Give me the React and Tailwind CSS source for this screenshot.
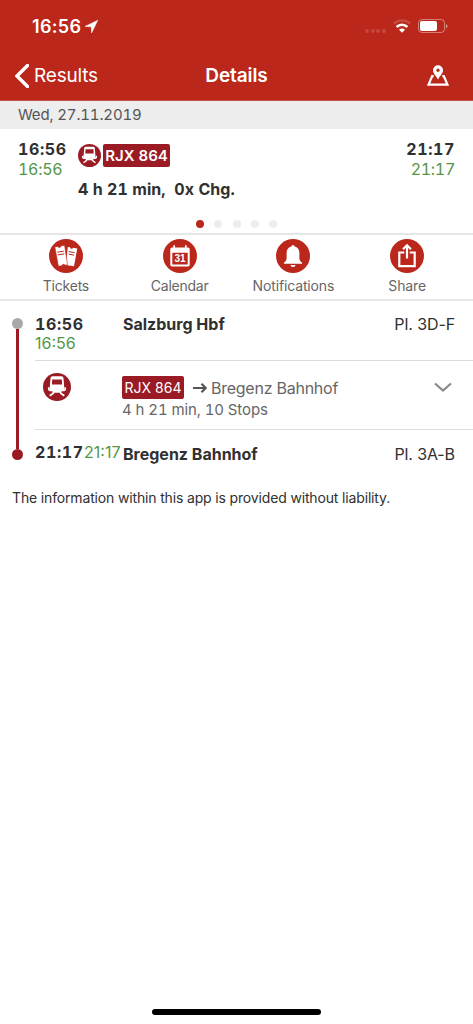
import React, { useState } from 'react';

const TrainIcon = ({ className }) => (
  <svg viewBox="0 0 28 28" className={className}>
    <circle cx="14" cy="14" r="14" fill="#9b1b24" />
    <path
      fill="#fff"
      fillRule="evenodd"
      d="M9.500 3.300h9a2 2 0 0 1 2 1.800l.8 10.400a2.400 2.400 0 0 1-2.400 2.500H9.100a2.400 2.400 0 0 1-2.400-2.500l.8-10.400a2 2 0 0 1 2-1.800zM9.200 6.500l-.3 5h10.200l-.3-5z"
    />
    <path d="M10.200 17.500h7.600v2.300h-7.600z" fill="#fff" />
    <path
      d="M5.800 14.200v2.300l1.200.9h3.300v2.800l-3.600 2.600M22.200 14.200v2.300l-1.200.9h-3.300v2.800l3.600 2.600"
      fill="none"
      stroke="#fff"
      strokeWidth="1.700"
    />
  </svg>
);

const TicketsIcon = () => (
  <svg viewBox="0 0 34 34" className="size-[34px]">
    <circle cx="17" cy="17" r="17" fill="#bb271a" />
    <path
      d="M18.800 7.900l2.200.3a1.600 1.600 0 0 0 3.100.5l4.200.8-3.300 17.700-8.200-1.300z"
      fill="#fff"
    />
    <path
      d="M5.800 7.900l3-.5a1.600 1.600 0 0 0 3.100-.5l3.700-.6 2.900 19.400-2.500.5a1.600 1.600 0 0 0-3 .5l-3.600.6z"
      fill="#fff"
      stroke="#bb271a"
      strokeWidth=".6"
    />
    <path
      d="M8.300 13.200l6.500-1M8.700 15.900l6.500-1M19.700 12.600l5.800 1M19.700 15.200l5.300.9"
      stroke="#bb271a"
      strokeWidth="1"
    />
  </svg>
);

const CalendarIcon = () => (
  <svg viewBox="0 0 34 34" className="size-[34px]">
    <circle cx="17" cy="17" r="17" fill="#bb271a" />
    <path
      fill="#fff"
      fillRule="evenodd"
      d="M9 8.500h16a1.700 1.700 0 0 1 1.700 1.700v15.600a1.700 1.700 0 0 1-1.700 1.700H9a1.700 1.700 0 0 1-1.700-1.700V10.200A1.700 1.700 0 0 1 9 8.500zM9.300 13.700v11.900h15.400V13.700z"
    />
    <path d="M11.200 6.300v4M22.800 6.300v4" stroke="#fff" strokeWidth="1.700" />
    <text
      x="17"
      y="23.200"
      textAnchor="middle"
      fill="#fff"
      className="font-['Liberation_Sans',sans-serif] text-[10px] font-bold"
    >
      31
    </text>
  </svg>
);

const BellIcon = () => (
  <svg viewBox="0 0 34 34" className="size-[34px]">
    <circle cx="17" cy="17" r="17" fill="#bb271a" />
    <path
      fill="#fff"
      d="M17 6.200c.9 0 1.500.5 1.600 1.300 3 .7 4.800 3.100 4.800 6.300v5.500c0 1.900 1 3.300 2.700 4.500v.9H7.900v-.9c1.700-1.200 2.700-2.600 2.700-4.500v-5.500c0-3.200 1.800-5.600 4.800-6.300.1-.8.7-1.300 1.600-1.300zM14.500 26h5a2.500 2 0 0 1-5 0z"
    />
  </svg>
);

const ShareIcon = () => (
  <svg viewBox="0 0 34 34" className="size-[34px]">
    <circle cx="17" cy="17" r="17" fill="#bb271a" />
    <path
      d="M14.300 13.500H9.300v13.700h15.400V13.500h-5M17 19.500V6.500M13 10.300l4-4 4 4"
      fill="none"
      stroke="#fff"
      strokeWidth="2.200"
    />
  </svg>
);

const MapPinIcon = () => (
  <svg viewBox="0 0 22 22" className="h-[22px] w-[22px]">
    <path
      fill="#fff"
      fillRule="evenodd"
      d="M11 .2a5 5 0 0 1 5 5c0 3.300-3 5.300-5 9.300-2-4-5-6-5-9.300a5 5 0 0 1 5-5zm0 3.300a1.700 1.700 0 1 0 0 3.400 1.700 1.700 0 0 0 0-3.400z"
    />
    <path d="M6.700 11.200H5.100L1.500 19.700h19l-3.600-8.500h-1.600" fill="none" stroke="#fff" strokeWidth="2.200" />
  </svg>
);

const StatusBar = () => (
  <div className="flex h-[52px] items-center justify-between pl-[32px] pr-[25px]">
    <div className="flex items-center gap-[4px]">
      <span className="text-[18px] font-semibold tracking-[0.3px]">16:56</span>
      <svg viewBox="0 0 13 13" className="size-[13px]">
        <path d="M12.800.2L0 6.400l6.200.4.400 6.200z" fill="#fff" stroke="#fff" strokeWidth=".5" strokeLinejoin="round" />
      </svg>
    </div>
    <div className="flex items-center">
      <div className="mr-[7px] mt-[9px] flex gap-[1.700px]">
        {[0, 1, 2, 3].map((i) => (
          <span key={i} className="size-[4px] rounded-full bg-white/15" />
        ))}
      </div>
      <svg viewBox="0 0 18 14" className="mr-[7px] h-[14px] w-[18px]">
        <path d="M.8 4.600a11.800 11.800 0 0 1 16.400 0" fill="none" stroke="#fff" strokeOpacity=".17" strokeWidth="2.300" />
        <path d="M3.600 8a7.700 7.700 0 0 1 10.800 0" fill="none" stroke="#fff" strokeWidth="2.600" />
        <path d="M9 13.800l-3-3.100a4.200 4.200 0 0 1 6 0z" fill="#fff" />
      </svg>
      <svg viewBox="0 0 30 14" className="h-[14px] w-[30px]">
        <rect x=".5" y=".5" width="26" height="13" rx="3.500" fill="none" stroke="#fff" strokeOpacity=".4" />
        <rect x="2" y="2" width="17" height="10" rx="2" fill="#fff" />
        <path d="M28 5v4.500q1.500-.6 1.500-2.200T28 5z" fill="#fff" fillOpacity=".5" />
      </svg>
    </div>
  </div>
);

const actions = [
  { label: 'Tickets', icon: <TicketsIcon />, text: 'tracking-[-0.2px]' },
  { label: 'Calendar', icon: <CalendarIcon />, text: 'tracking-[-0.25px]' },
  { label: 'Notifications', icon: <BellIcon />, text: 'tracking-[-0.15px]' },
  { label: 'Share', icon: <ShareIcon />, text: 'tracking-[-0.15px]' },
];

const App = () => {
  const [page, setPage] = useState(0);

  return (
    <div className="flex h-[1024px] w-[473px] flex-col overflow-hidden bg-white font-['Inter',sans-serif] text-[#303030]">
      <header className="h-[101px] shrink-0 border-b border-[#c4513f] bg-[#bb271a] text-white">
        <StatusBar />
        <div className="grid h-[48px] grid-cols-3 items-center pl-[15px] pr-[24px]">
          <button className="flex items-center gap-[5px] text-[19px] leading-[24px] tracking-[-0.2px]">
            <svg viewBox="0 0 14 24" className="h-[24px] w-[14px]">
              <path d="M12.500 1.500L2 12l10.500 10.500" fill="none" stroke="#fff" strokeWidth="3.400" strokeLinecap="round" />
            </svg>
            <span>Results</span>
          </button>
          <h1 className="ml-[9px] text-center text-[19px] font-semibold leading-[24px] tracking-[-0.1px]">Details</h1>
          <button className="justify-self-end">
            <MapPinIcon />
          </button>
        </div>
      </header>

      <div className="h-[28px] shrink-0 bg-[#ededed] pl-[18px] text-[15px] tabular-nums leading-[28px] tracking-[-0.15px] text-[#555]">
        Wed, 27.11.2019
      </div>

      <section className="flex h-[106px] shrink-0 flex-col border-b-2 border-[#e6e6e6]">
        <div className="flex h-[91px] pl-[18px] pr-[18px] pt-[10px] tabular-nums">
          <div className="w-[60px] leading-[20px]">
            <div className="text-[16px] font-bold tracking-[0.6px]">16:56</div>
            <div className="text-[16px] tracking-[-0.3px] text-[#559646]">16:56</div>
          </div>
          <div className="grow pt-[5px]">
            <div className="flex items-center gap-[2px]">
              <TrainIcon className="size-[23px]" />
              <span className="h-[23px] w-[67px] rounded-[2px] bg-[#9b1b24] text-center text-[15px] font-semibold leading-[23px] text-white">
                RJX 864
              </span>
            </div>
            <div className="mt-[12px] whitespace-pre text-[16px] font-bold leading-[20px] tracking-[0.05px]">4 h 21 min,  0x Chg.</div>
          </div>
          <div className="text-right leading-[20px]">
            <div className="text-[16px] font-bold tracking-[0.6px]">21:17</div>
            <div className="text-[16px] tracking-[-0.3px] text-[#559646]">21:17</div>
          </div>
        </div>
        <div className="flex justify-center gap-[10.300px]">
          {[0, 1, 2, 3, 4].map((i) => (
            <button
              key={i}
              onClick={() => setPage(i)}
              className={page === i ? 'size-[8px] rounded-full bg-[#bb271a]' : 'size-[8px] rounded-full bg-[#ededed]'}
            />
          ))}
        </div>
      </section>

      <nav className="grid h-[66px] shrink-0 grid-cols-4 border-b-2 border-[#e6e6e6] px-[9px] pt-[4px]">
        {actions.map((action) => (
          <button key={action.label} className="flex flex-col items-center">
            {action.icon}
            <span className={`mt-[3px] text-[14px] leading-[20px] text-[#666] ${action.text}`}>{action.label}</span>
          </button>
        ))}
      </nav>

      <section className="flex h-[174px] shrink-0">
        <div className="flex w-[35px] flex-col items-center pt-[17px]">
          <span className="size-[11px] rounded-full bg-[#a8a8a8]" />
          <span className="h-[120px] w-[3px] bg-[#9b1b24]" />
          <span className="size-[11px] rounded-full bg-[#9b1b24]" />
        </div>
        <div className="grow">
          <div className="flex h-[60px] border-b border-[#dcdcdc] pr-[18px] pt-[13px] text-[16px] leading-[20px]">
            <div className="w-[88px]">
              <div className="font-bold tabular-nums tracking-[0.6px]">16:56</div>
              <div className="-mt-px text-[#559646]">16:56</div>
            </div>
            <div className="grow font-bold">Salzburg Hbf</div>
            <div className="tracking-[-0.1px]">Pl. 3D-F</div>
          </div>
          <div className="flex h-[69px] border-b border-[#dcdcdc] pr-[21px] pt-[12px]">
            <TrainIcon className="ml-[8px] mr-[51px] size-[28px]" />
            <div className="grow pt-[3px] text-[#666]">
              <div className="flex items-center">
                <span className="h-[23px] w-[62px] rounded-[2px] bg-[#9b1b24] text-center text-[14px] leading-[23px] text-white">
                  RJX 864
                </span>
                <svg viewBox="0 0 14 12" className="ml-[9px] mr-[4px] h-[12px] w-[14px]">
                  <path d="M0 6h12.500M8.500 1.800L12.700 6l-4.200 4.200" fill="none" stroke="#555" strokeWidth="2.200" />
                </svg>
                <span className="text-[16px] leading-[20px] tracking-[-0.25px]">Bregenz Bahnhof</span>
              </div>
              <div className="mt-[1px] text-[15px] tabular-nums leading-[20px] tracking-[-0.1px]">4 h 21 min, 10 Stops</div>
            </div>
            <svg viewBox="0 0 18 10" className="mt-[9px] h-[10px] w-[18px]">
              <path d="M1 1.500l8 7 8-7" fill="none" stroke="#888" strokeWidth="2.200" />
            </svg>
          </div>
          <div className="flex pr-[18px] pt-[14px] text-[16px] leading-[20px]">
            <div className="flex w-[88px] leading-[16px]">
              <span className="w-[49px] font-bold tabular-nums tracking-[0.6px]">21:17</span>
              <span className="text-[#559646]">21:17</span>
            </div>
            <div className="grow font-bold">Bregenz Bahnhof</div>
            <div className="tracking-[-0.1px]">Pl. 3A-B</div>
          </div>
        </div>
      </section>

      <p className="mt-[13px] pl-[12px] text-[14px] leading-[20px] tracking-[-0.155px]">
        The information within this app is provided without liability.
      </p>

      <div className="mx-auto mb-[9px] mt-auto h-[6px] w-[169px] shrink-0 rounded-full bg-black" />
    </div>
  );
};

export default App;
